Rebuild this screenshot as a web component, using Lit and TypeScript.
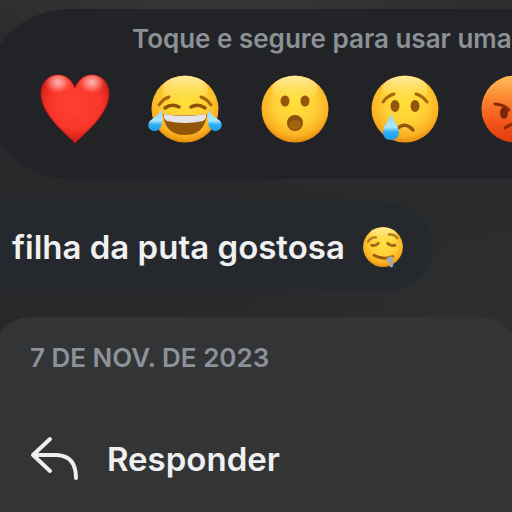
import { LitElement, html, css, svg } from "lit";
import { customElement } from "lit/decorators.js";

const ball = svg`<circle cx="37" cy="37" r="33.5" fill="url(#skin)"/><ellipse cx="37" cy="17" rx="23" ry="13" fill="url(#shine)"/>`;

const heart = svg`
  <path d="M37 71 C33 66 3 44 3 22 C3 10 11 3 20 3 C29 3 34 9 37 16 C40 9 45 3 54 3 C63 3 71 10 71 22 C71 44 41 66 37 71Z" fill="url(#red)" stroke="#b9150f" stroke-width="1"/>
  <ellipse cx="20" cy="15" rx="14" ry="12" fill="url(#gloss)"/>
  <ellipse cx="54" cy="15" rx="14" ry="12" fill="url(#gloss)"/>`;

const joy = svg`${ball}
  <path d="M11 33 Q15 27 21 25 M63 33 Q59 27 53 25" fill="none" stroke="#a5650b" stroke-width="3" stroke-linecap="round"/>
  <path d="M17 36 Q24 31 31 35 M43 35 Q50 31 57 36" fill="none" stroke="#8f5208" stroke-width="3.5" stroke-linecap="round"/>
  <path d="M15 42 Q37 45 59 42 Q57 63 37 63 Q17 63 15 42Z" fill="#935509"/>
  <path d="M16 42 Q37 46 58 42 Q59 47 55 49 Q37 53 19 49 Q15 47 16 42Z" fill="#e4e4e8"/>
  <path d="M14 38 C15 49 14 59 7 59 C0 59 -2 52 3 48 C7 45 11 42 14 38Z" fill="url(#tear)"/>
  <path d="M60 38 C59 49 60 59 67 59 C74 59 76 52 71 48 C67 45 63 42 60 38Z" fill="url(#tear)"/>`;

const wow = svg`${ball}
  <ellipse cx="27" cy="29" rx="4.5" ry="5.5" fill="#945609"/><ellipse cx="47" cy="29" rx="4.5" ry="5.5" fill="#945609"/>
  <ellipse cx="37" cy="51" rx="8" ry="8" fill="#8b5009"/><ellipse cx="37" cy="53" rx="6" ry="5" fill="#a4630d"/>`;

const sad = svg`${ball}
  <path d="M15 30 Q19 24 26 22 M59 30 Q55 24 48 22" fill="none" stroke="#a5650b" stroke-width="3" stroke-linecap="round"/>
  <ellipse cx="27" cy="34" rx="4.5" ry="6" fill="#945609"/><ellipse cx="47" cy="34" rx="4.5" ry="6" fill="#945609"/>
  <path d="M29 57 Q37 49 45 58" fill="none" stroke="#945609" stroke-width="3.5" stroke-linecap="round"/>
  <path d="M23 42 C26 50 31 54 31 60 C31 65 28 68 23 68 C18 68 15 65 15 60 C15 54 20 50 23 42Z" fill="url(#tear)"/>`;

const angry = svg`
  <circle cx="37" cy="37" r="33.5" fill="url(#rage)"/>
  <path d="M17 32 Q27 33 31 38 M57 32 Q47 33 43 38" fill="none" stroke="#8a2d08" stroke-width="3" stroke-linecap="round"/>
  <ellipse cx="26" cy="41" rx="4" ry="6" fill="#76260a"/><ellipse cx="48" cy="41" rx="4" ry="6" fill="#76260a"/>
  <path d="M27 56 Q37 48 47 56" fill="none" stroke="#8a2d08" stroke-width="3" stroke-linecap="round"/>`;

const drool = svg`${ball}
  <path d="M12 28 Q17 20 25 21 M47 16 Q56 15 61 22" fill="none" stroke="#b07e28" stroke-width="4" stroke-linecap="round"/>
  <path d="M18 34 Q25 36 29 31 M45 31 Q49 36 57 34" fill="none" stroke="#a0691a" stroke-width="5" stroke-linecap="round"/>
  <path d="M22 51 Q38 60 53 53" fill="none" stroke="#9b5a0c" stroke-width="5" stroke-linecap="round"/>
  <path d="M43 56 Q51 50 54 54 L54 69 Q51 74 48 69 L48 63 Q41 63 43 56Z" fill="#9fabae"/>`;

const reactions = [
  { name: "Amei", art: heart },
  { name: "Haha", art: joy },
  { name: "Uau", art: wow },
  { name: "Triste", art: sad },
  { name: "Grr", art: angry },
];

@customElement("app-root")
export class AppRoot extends LitElement {
  static styles = css`
    :host {
      display: flex;
      flex-direction: column;
      box-sizing: border-box;
      min-height: 100vh;
      overflow: hidden;
      padding-top: 9px;
      font-family: Inter, "Liberation Sans", sans-serif;
      background:
        radial-gradient(ellipse 60% 10% at 45% 0, #363737, transparent),
        radial-gradient(ellipse 70% 35% at 100% 56%, #2e2f30, transparent),
        linear-gradient(#2b2c2e, #28292b 36%, #242528 42%, #27282a 60%, #303132);
      color: #f0f0f1;
    }
    button {
      border: 0;
      padding: 0;
      background: none;
      color: inherit;
      font: inherit;
    }
    .defs { position: absolute; width: 0; height: 0; }
    .tray {
      box-sizing: border-box;
      height: 170px;
      margin: 0 -88px 0 -16px;
      padding: 14px 0 0 54px;
      border-radius: 85px;
      background: #222327;
    }
    .hint {
      margin: 0 0 0 94px;
      font-size: 26px;
      line-height: 32px;
      font-weight: 600;
      color: #8d9196;
      white-space: nowrap;
    }
    .row { display: flex; gap: 36px; margin-top: 17px; }
    .reaction { flex: none; width: 74px; height: 74px; }
    .art { display: block; width: 100%; height: 100%; overflow: visible; }
    .bubble {
      align-self: flex-start;
      display: flex;
      align-items: center;
      gap: 16px;
      box-sizing: border-box;
      height: 86px;
      margin: 25px 0 27px;
      padding: 0 28px 0 12px;
      border-radius: 0 42px 42px 0;
      background: #25282c;
      font-size: 33px;
      font-weight: 600;
      white-space: nowrap;
    }
    .inline { width: 44px; height: 44px; }
    .sheet {
      flex: 1;
      margin: 0 -6px;
      padding: 25px 36px 16px;
      border-radius: 36px 36px 0 0;
      background: #333436;
    }
    .date {
      margin: 0;
      font-size: 26px;
      line-height: 32px;
      font-weight: 600;
      color: #8d9198;
      white-space: nowrap;
    }
    .reply {
      display: flex;
      align-items: center;
      gap: 28px;
      margin-top: 61px;
      font-size: 33px;
      line-height: 48px;
      font-weight: 600;
    }
    .arrow { width: 49px; height: 48px; }
  `;

  render() {
    return html`
      <svg class="defs" aria-hidden="true">
        <defs>
          <radialGradient id="skin" cx=".5" cy=".4" r=".63">
            <stop offset="0" stop-color="#ffe03b"/><stop offset=".5" stop-color="#ffd036"/>
            <stop offset=".8" stop-color="#fbb022"/><stop offset="1" stop-color="#e07e06"/>
          </radialGradient>
          <linearGradient id="shine" x2="0" y2="1">
            <stop offset="0" stop-color="#fffbd2" stop-opacity=".7"/><stop offset="1" stop-color="#fff06a" stop-opacity="0"/>
          </linearGradient>
          <radialGradient id="red" cx=".5" cy=".42" r=".58">
            <stop offset="0" stop-color="#ff4134"/><stop offset=".65" stop-color="#f9362b"/><stop offset="1" stop-color="#c91c15"/>
          </radialGradient>
          <radialGradient id="gloss" cy=".3">
            <stop offset="0" stop-color="#ffb8b0"/><stop offset=".5" stop-color="#ff918a" stop-opacity=".7"/><stop offset="1" stop-color="#ff5a50" stop-opacity="0"/>
          </radialGradient>
          <linearGradient id="tear" x2="0" y2="1">
            <stop offset="0" stop-color="#9bd7ee"/><stop offset=".5" stop-color="#a9e7fb"/><stop offset=".7" stop-color="#2eaef4"/><stop offset="1" stop-color="#229be8"/>
          </linearGradient>
          <linearGradient id="rage" x2="0" y2="1">
            <stop offset="0" stop-color="#ffc05c"/><stop offset=".35" stop-color="#fb8430"/><stop offset=".7" stop-color="#f4541a"/><stop offset="1" stop-color="#e03c0c"/>
          </linearGradient>
        </defs>
      </svg>
      <section class="tray">
        <p class="hint">Toque e segure para usar uma</p>
        <div class="row">
          ${reactions.map(
            (r) => html`<button class="reaction" type="button" aria-label=${r.name}>
              <svg class="art" viewBox="0 0 74 74" aria-hidden="true">${r.art}</svg>
            </button>`
          )}
        </div>
      </section>
      <div class="bubble">
        <span>filha da puta gostosa</span>
        <svg class="inline" viewBox="0 0 74 74" role="img" aria-label="Rosto babando">${drool}</svg>
      </div>
      <section class="sheet">
        <p class="date">7 DE NOV. DE 2023</p>
        <button class="reply" type="button">
          <svg class="arrow" viewBox="0 0 49 48" fill="none" stroke="#eeeeef" stroke-width="4" stroke-linecap="round" stroke-linejoin="round" aria-hidden="true">
            <path d="M20 4 L3 20 L20 36 M4 20 H27 Q46 21 46 43"/>
          </svg>
          <span>Responder</span>
        </button>
      </section>
    `;
  }
}
